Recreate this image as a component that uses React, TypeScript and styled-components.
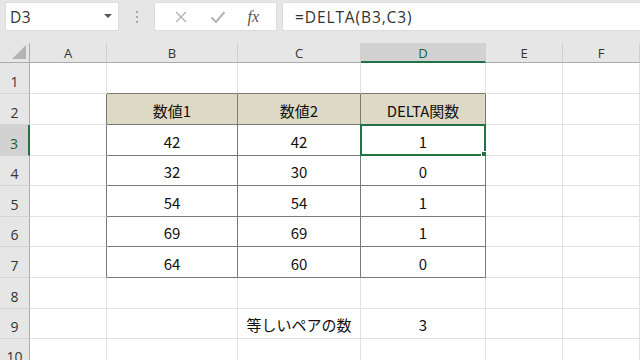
import React from 'react';
import styled, { createGlobalStyle, css } from 'styled-components';

const GlobalStyle = createGlobalStyle`
  html, body {
    margin: 0;
    padding: 0;
    background: #ffffff;
    overflow: hidden;
  }
  * {
    box-sizing: border-box;
  }
`;

const Page = styled.div`
  width: 640px;
  height: 360px;
  overflow: hidden;
  font-family: 'Noto Sans CJK JP', 'Noto Sans', sans-serif;
  color: #222;
`;

const Toolbar = styled.div`
  height: 43px;
  background: #e6e6e6;
  display: flex;
  align-items: flex-start;
  padding: 2px 0 0 5px;
`;

const NameBox = styled.div`
  width: 114px;
  height: 29px;
  background: #fff;
  border: 1px solid #dcdcdc;
  display: flex;
  align-items: center;
  justify-content: space-between;
  padding: 0 6px 0 4px;
  font-family: 'Open Sans', 'Noto Sans', sans-serif;
  font-size: 15.5px;
  letter-spacing: 0.6px;
  color: #333;
`;

const Caret = styled.span`
  width: 0;
  height: 0;
  border-left: 4px solid transparent;
  border-right: 4px solid transparent;
  border-top: 4px solid #555;
  margin-top: -2px;
`;

const Grip = styled.div`
  width: 35px;
  height: 29px;
  display: flex;
  flex-direction: column;
  align-items: center;
  justify-content: center;
  gap: 3px;
`;

const GripDot = styled.span`
  width: 2px;
  height: 2px;
  background: #a8a8a8;
`;

const FxBox = styled.div`
  width: 123px;
  height: 29px;
  background: #fff;
  border: 1px solid #dcdcdc;
  display: flex;
  align-items: center;
  justify-content: space-around;
  padding: 0 6px 0 8px;
  color: #b0b0b0;
`;

const FxLabel = styled.span`
  font-family: 'Liberation Serif', serif;
  font-style: italic;
  font-size: 16px;
  color: #555;
`;

const FormulaBox = styled.div`
  flex: 1;
  height: 29px;
  margin-left: 5px;
  background: #fff;
  border: 1px solid #dcdcdc;
  border-right: none;
  display: flex;
  align-items: center;
  padding-left: 12px;
  font-family: 'Open Sans', 'Noto Sans', sans-serif;
  font-size: 15.5px;
  letter-spacing: 0.9px;
  color: #333;
`;

const rowHeights = [31, 31, 31, 30, 31, 30, 31, 31, 30, 30];

const Sheet = styled.div`
  display: grid;
  grid-template-columns: 30px 77px 131px 123px 125px 77px 1fr;
  grid-template-rows: 20px ${rowHeights.map((h) => `${h}px`).join(' ')};
`;

const Corner = styled.div`
  background: #e6e6e6;
  border-right: 1px solid #ababab;
  border-bottom: 1px solid #ababab;
  position: relative;
  &::after {
    content: '';
    position: absolute;
    right: 3px;
    bottom: 3px;
    width: 0;
    height: 0;
    border-left: 14px solid transparent;
    border-bottom: 14px solid #b4b4b4;
  }
`;

const ColHead = styled.div<{ $active?: boolean }>`
  background: ${(p) => (p.$active ? '#d2d2d2' : '#e6e6e6')};
  border-right: 1px solid #d0d0d0;
  border-bottom: ${(p) => (p.$active ? '2px solid #217346' : '1px solid #ababab')};
  display: flex;
  align-items: center;
  justify-content: center;
  font-family: 'Open Sans', 'Noto Sans', sans-serif;
  font-size: 13px;
  color: ${(p) => (p.$active ? '#1f5c3a' : '#333')};
  padding-top: ${(p) => (p.$active ? '1px' : '0')};
`;

const RowHead = styled.div<{ $active?: boolean }>`
  background: ${(p) => (p.$active ? '#d2d2d2' : '#e6e6e6')};
  border-right: ${(p) => (p.$active ? '2px solid #217346' : '1px solid #ababab')};
  border-bottom: 1px solid #d4d4d4;
  display: flex;
  align-items: flex-end;
  justify-content: center;
  padding-bottom: 2px;
  font-family: 'Open Sans', 'Noto Sans', sans-serif;
  font-size: 14px;
  color: ${(p) => (p.$active ? '#1f5c3a' : '#333')};
`;

const Cell = styled.div<{ $head?: boolean; $darkR?: boolean; $darkB?: boolean; $selected?: boolean }>`
  position: relative;
  background: ${(p) => (p.$head ? '#ddd9c4' : '#fff')};
  border-right: 1px solid ${(p) => (p.$darkR ? '#7a7a7a' : '#e1e1e1')};
  border-bottom: 1px solid ${(p) => (p.$darkB ? '#7a7a7a' : '#e1e1e1')};
  display: flex;
  align-items: flex-end;
  justify-content: center;
  padding-bottom: 3px;
  font-size: 15px;
  color: #111;
  white-space: nowrap;
  ${(p) =>
    p.$selected &&
    css`
      &::before {
        content: '';
        position: absolute;
        left: -1px;
        top: -1px;
        right: -1px;
        bottom: -1px;
        border: 2px solid #217346;
      }
      &::after {
        content: '';
        position: absolute;
        right: -4px;
        bottom: -4px;
        width: 6px;
        height: 6px;
        background: #217346;
        border: 1px solid #fff;
      }
    `}
`;

type Row = string[];

// columns A..F
const rows: Row[] = [
  ['', '', '', '', '', ''],
  ['', '数値1', '数値2', 'DELTA関数', '', ''],
  ['', '42', '42', '1', '', ''],
  ['', '32', '30', '0', '', ''],
  ['', '54', '54', '1', '', ''],
  ['', '69', '69', '1', '', ''],
  ['', '64', '60', '0', '', ''],
  ['', '', '', '', '', ''],
  ['', '', '等しいペアの数', '3', '', ''],
  ['', '', '', '', '', ''],
];

const columns = ['A', 'B', 'C', 'D', 'E', 'F'];

const inTable = (r: number, c: number) => r >= 1 && r <= 6 && c >= 1 && c <= 3;

const App: React.FC = () => {
  return (
    <Page>
      <GlobalStyle />
      <Toolbar>
        <NameBox>
          D3
          <Caret />
        </NameBox>
        <Grip>
          <GripDot />
          <GripDot />
          <GripDot />
        </Grip>
        <FxBox>
          <svg width="14" height="14" viewBox="0 0 14 14">
            <path d="M2 2 L12 12 M12 2 L2 12" stroke="#b4b4b4" strokeWidth="1.4" fill="none" />
          </svg>
          <svg width="16" height="14" viewBox="0 0 16 14">
            <path d="M1.5 7.5 L6 12 L14.5 2" stroke="#b4b4b4" strokeWidth="2" fill="none" />
          </svg>
          <FxLabel>fx</FxLabel>
        </FxBox>
        <FormulaBox>=DELTA(B3,C3)</FormulaBox>
      </Toolbar>
      <Sheet>
        <Corner />
        {columns.map((c) => (
          <ColHead key={c} $active={c === 'D'}>
            {c}
          </ColHead>
        ))}
        {rows.map((row, r) => (
          <React.Fragment key={r}>
            <RowHead $active={r === 2}>{r + 1}</RowHead>
            {row.map((v, c) => (
              <Cell
                key={c}
                $head={r === 1 && c >= 1 && c <= 3}
                $darkR={inTable(r, c) || (c === 0 && r >= 1 && r <= 6)}
                $darkB={inTable(r, c) || (r === 0 && c >= 1 && c <= 3)}
                $selected={r === 2 && c === 3}
              >
                {v}
              </Cell>
            ))}
          </React.Fragment>
        ))}
      </Sheet>
    </Page>
  );
};

export default App;
